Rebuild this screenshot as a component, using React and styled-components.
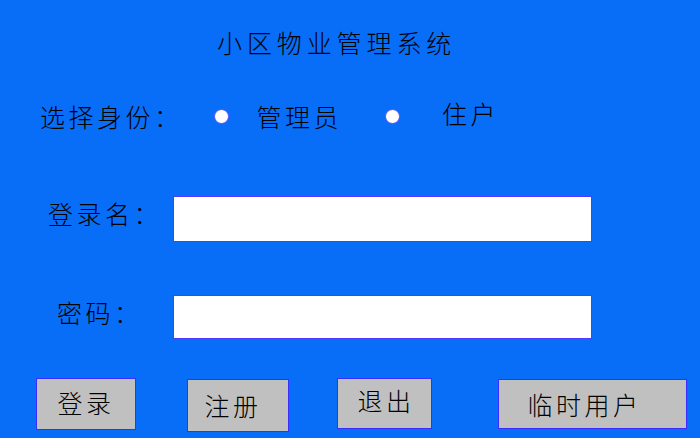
import React from 'react'
import styled, { createGlobalStyle } from 'styled-components'

const GlobalStyle = createGlobalStyle`
    html, body {
        margin: 0;
        padding: 0;
        background: #086ef8;
    }
    * {
        box-sizing: border-box;
    }
`;

const Page = styled.div`
    width: 700px;
    height: 438px;
    background: #086ef8;
    display: flex;
    flex-direction: column;
    font-family: "Noto Sans CJK SC", "Liberation Sans", sans-serif;
    color: #000;
    overflow: hidden;
`;

const Title = styled.h1`
    margin: 30px 0 0 217px;
    font-size: 25px;
    font-weight: 300;
    line-height: 25px;
    letter-spacing: 4.9px;
    white-space: nowrap;
`;

const Text = styled.span`
    font-size: 25px;
    font-weight: 300;
    line-height: 25px;
    letter-spacing: 3.5px;
    white-space: nowrap;
    margin-left: ${p => p.$left || 0}px;
    margin-bottom: ${p => p.$raise ? p.$raise * 2 : 0}px;
`;

const RoleRow = styled.div`
    display: flex;
    align-items: center;
    margin-top: 49px;
    height: 25px;
    padding-left: 40px;
`;

const Radio = styled.span`
    width: 15px;
    height: 15px;
    border-radius: 50%;
    background: #fff;
    border: 1px solid #5a4dff;
    margin-left: ${p => p.$left}px;
    flex-shrink: 0;
`;

const FieldRow = styled.div`
    display: flex;
    align-items: flex-start;
    margin-top: ${p => p.$top}px;
`;

const Label = styled(Text)`
    width: ${p => p.$width}px;
    margin-top: 5px;
    margin-left: 0;
    padding-left: ${p => p.$indent}px;
`;

const Input = styled.input`
    width: 419px;
    height: ${p => p.$height}px;
    background: #fff;
    border: 1px solid #4b3cff;
    outline: none;
    padding: 0 6px;
    font-size: 18px;
`;

const ButtonRow = styled.div`
    display: flex;
    align-items: flex-start;
    margin-top: 39px;
`;

const Button = styled.button`
    width: ${p => p.$width}px;
    height: ${p => p.$height}px;
    margin-left: ${p => p.$left}px;
    margin-top: ${p => p.$top || 0}px;
    background: #c0c0c0;
    border: 1px solid #3b2cff;
    padding: 0 ${p => p.$pull || 0}px ${p => p.$lift || 0}px ${p => p.$push || 0}px;
    font-family: inherit;
    font-size: 25px;
    font-weight: 300;
    line-height: 25px;
    letter-spacing: 3.5px;
    color: #000;
    white-space: nowrap;
    cursor: pointer;
`;

const App = () => {
    return (
        <Page>
            <GlobalStyle />
            <Title>小区物业管理系统</Title>
            <RoleRow>
                <Text>选择身份：</Text>
                <Radio $left={31} />
                <Text $left={28}>管理员</Text>
                <Radio $left={43} />
                <Text $left={42} $raise={3}>住户</Text>
            </RoleRow>
            <FieldRow $top={67}>
                <Label $width={173} $indent={48}>登录名：</Label>
                <Input $height={46} />
            </FieldRow>
            <FieldRow $top={53}>
                <Label $width={173} $indent={57}>密码：</Label>
                <Input $height={44} type="password" />
            </FieldRow>
            <ButtonRow>
                <Button $width={100} $height={52} $left={36} $lift={4}>登录</Button>
                <Button $width={102} $height={53} $left={51} $top={1} $pull={10}>注册</Button>
                <Button $width={95} $height={51} $left={48} $lift={6} $push={3}>退出</Button>
                <Button $width={189} $height={50} $left={66} $top={1} $pull={16}>临时用户</Button>
            </ButtonRow>
        </Page>
    )
}

export default App
